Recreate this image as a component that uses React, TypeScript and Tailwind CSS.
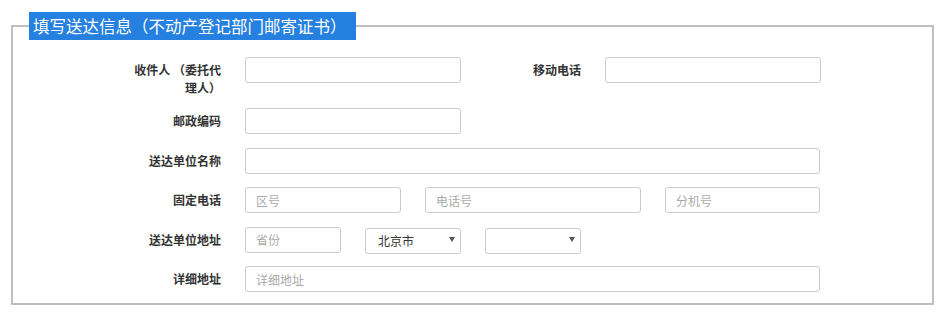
import React from 'react'

const font = { fontFamily: '"Microsoft YaHei", "Noto Sans CJK SC", sans-serif' }

function Label({ children }: { children: React.ReactNode }) {
  return (
    <label className="w-[96px] shrink-0 pt-[4px] text-right text-[12px] leading-[18px] font-bold text-[#333]">
      {children}
    </label>
  )
}

function Field({ w, placeholder }: { w: string; placeholder?: string }) {
  return (
    <input
      type="text"
      placeholder={placeholder}
      className={`${w} h-[26px] shrink-0 rounded-[3px] border border-[#ccc] bg-white px-[10px] text-[12px] text-[#333] outline-none placeholder:text-[#aaa]`}
    />
  )
}

function Select({ value }: { value?: string }) {
  return (
    <div className="relative w-[96px] h-[26px] shrink-0">
      <select
        defaultValue={value ?? ''}
        className="h-full w-full appearance-none rounded-[3px] border border-[#ccc] bg-white pl-[12px] pr-[20px] text-[12px] text-[#333] outline-none"
      >
        <option value="">{''}</option>
        {value && <option value={value}>{value}</option>}
      </select>
      {/* 下拉三角 */}
      <span className="pointer-events-none absolute right-[6px] top-[10px] h-0 w-0 border-x-[3px] border-t-[5px] border-x-transparent border-t-[#555]" />
    </div>
  )
}

export default function App() {
  return (
    <div className="w-[945px] h-[316px] bg-white overflow-hidden" style={font}>
      <fieldset className="mx-[11px] mt-[12px] border-2 border-[#bfbfbf]">
        <legend className="ml-[16px] w-[327px] h-[28px] bg-[#2580e0] pl-[4px] text-[16.5px] leading-[28px] text-white whitespace-nowrap">
          填写送达信息（不动产登记部门邮寄证书）
        </legend>

        <div className="flex flex-col gap-[13.5px] pl-[112px] pt-[17px] pb-[11px]">
          {/* 收件人 / 移动电话 */}
          <div className="flex items-start gap-[24px] -mb-[2.5px]">
            <Label>收件人 （委托代理人）</Label>
            <Field w="w-[216px]" />
            <Label>移动电话</Label>
            <Field w="w-[216px]" />
          </div>

          <div className="flex items-start gap-[24px]">
            <Label>邮政编码</Label>
            <Field w="w-[216px]" />
          </div>

          <div className="flex items-start gap-[24px]">
            <Label>送达单位名称</Label>
            <Field w="w-[575px]" />
          </div>

          <div className="flex items-start gap-[24px]">
            <Label>固定电话</Label>
            <Field w="w-[156px]" placeholder="区号" />
            <Field w="w-[216px]" placeholder="电话号" />
            <Field w="w-[155px]" placeholder="分机号" />
          </div>

          <div className="flex items-start gap-[24px]">
            <Label>送达单位地址</Label>
            <Field w="w-[96px]" placeholder="省份" />
            <Select value="北京市" />
            <Select />
          </div>

          <div className="flex items-start gap-[24px]">
            <Label>详细地址</Label>
            <Field w="w-[575px]" placeholder="详细地址" />
          </div>
        </div>
      </fieldset>
    </div>
  )
}
